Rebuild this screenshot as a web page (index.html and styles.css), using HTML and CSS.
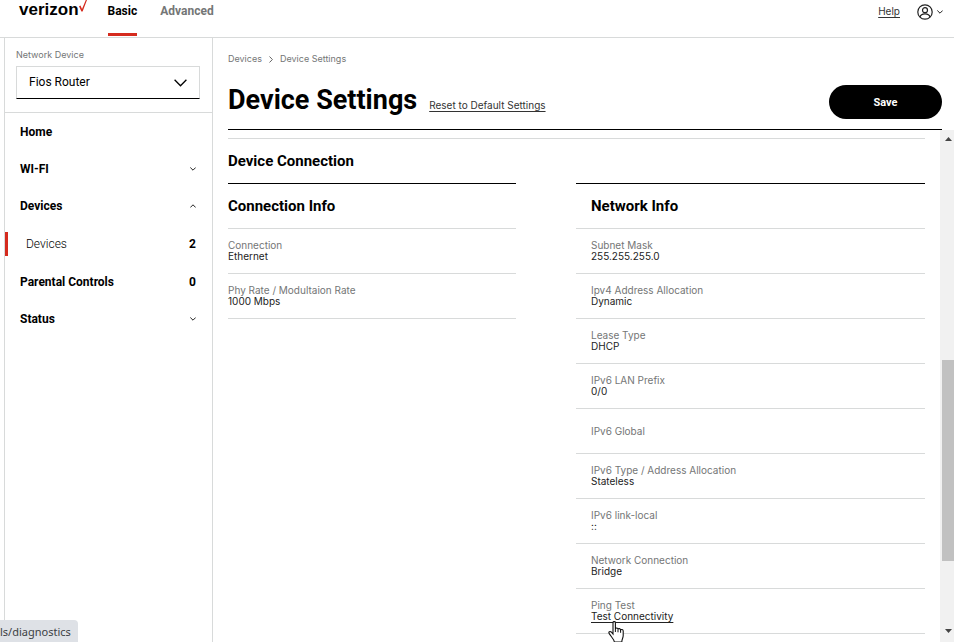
FILE: index.html
```html
<!DOCTYPE html>
<html lang="en">
<head>
  <meta charset="UTF-8">
  <meta name="viewport" content="width=device-width, initial-scale=1.0">
  <title>Device Settings</title>
  <link rel="stylesheet" href="styles.css">
</head>
<body>
  <header class="topbar">
    <a class="logo" href="#">verizon<svg class="logo-check" width="8" height="12" viewBox="0 0 8 12"><path d="M0 6.2 L1.5 5.6 L3 9 L6.8 0 L8 0 L3.6 11.5 L2.4 11.5 Z" fill="#d52b1e"/></svg></a>
    <nav class="tabs">
      <a class="tab active" href="#">Basic</a>
      <a class="tab" href="#">Advanced</a>
    </nav>
    <a class="help" href="#">Help</a>
    <button class="account" aria-label="Account">
      <svg width="16" height="16" viewBox="0 0 16 16" fill="none" stroke="#222" stroke-width="1.2"><circle cx="8" cy="8" r="7.2"/><circle cx="8" cy="6.2" r="2.5"/><path d="M3 13 C3.6 10.6 5.6 9.9 8 9.9 S12.4 10.6 13 13"/></svg>
      <svg width="6" height="4" viewBox="0 0 6 4" fill="none" stroke="#222"><path d="M0.3 0.5 L3 3.2 L5.7 0.5"/></svg>
    </button>
  </header>

  <div class="layout">
    <aside class="sidebar">
      <div class="device-picker">
        <label for="network-device">Network Device</label>
        <div class="select-wrap">
          <select id="network-device">
            <option>Fios Router</option>
          </select>
          <svg class="select-arrow" width="13" height="8" viewBox="0 0 13 8" fill="none" stroke="#000" stroke-width="1.3"><path d="M0.6 0.8 L6.5 6.8 L12.4 0.8"/></svg>
        </div>
      </div>
      <ul class="menu">
        <li><a href="#">Home</a></li>
        <li><a href="#">WI-FI <svg width="6" height="4" viewBox="0 0 6 4" fill="none" stroke="#222"><path d="M0.3 0.5 L3 3.2 L5.7 0.5"/></svg></a></li>
        <li>
          <a href="#">Devices <svg width="6" height="4" viewBox="0 0 6 4" fill="none" stroke="#222"><path d="M0.3 3.5 L3 0.8 L5.7 3.5"/></svg></a>
          <ul class="submenu">
            <li><a href="#">Devices <b>2</b></a></li>
          </ul>
        </li>
        <li><a href="#">Parental Controls <b>0</b></a></li>
        <li><a href="#">Status <svg width="6" height="4" viewBox="0 0 6 4" fill="none" stroke="#222"><path d="M0.3 0.5 L3 3.2 L5.7 0.5"/></svg></a></li>
      </ul>
    </aside>

    <main class="main">
      <div class="page-head">
        <div class="breadcrumb">
          <a href="#">Devices</a>
          <svg width="4" height="7" viewBox="0 0 4 7" fill="none" stroke="#666"><path d="M0.5 0.5 L3.4 3.5 L0.5 6.5"/></svg>
          <span>Device Settings</span>
        </div>
        <div class="title-row">
          <h1>Device Settings</h1>
          <a class="reset" href="#">Reset to Default Settings</a>
          <button class="save">Save</button>
        </div>
      </div>

      <div class="scroll-area">
        <div class="content">
          <h2>Device Connection</h2>
          <div class="columns">
            <section class="info">
              <h3>Connection Info</h3>
              <dl>
                <div class="row"><dt>Connection</dt><dd>Ethernet</dd></div>
                <div class="row"><dt>Phy Rate / Modultaion Rate</dt><dd>1000 Mbps</dd></div>
              </dl>
            </section>
            <section class="info network">
              <h3>Network Info</h3>
              <dl>
                <div class="row"><dt>Subnet Mask</dt><dd>255.255.255.0</dd></div>
                <div class="row"><dt>Ipv4 Address Allocation</dt><dd>Dynamic</dd></div>
                <div class="row"><dt>Lease Type</dt><dd>DHCP</dd></div>
                <div class="row"><dt>IPv6 LAN Prefix</dt><dd>0/0</dd></div>
                <div class="row"><dt>IPv6 Global</dt></div>
                <div class="row"><dt>IPv6 Type / Address Allocation</dt><dd>Stateless</dd></div>
                <div class="row"><dt>IPv6 link-local</dt><dd>::</dd></div>
                <div class="row"><dt>Network Connection</dt><dd>Bridge</dd></div>
                <div class="row">
                  <dt>Ping Test</dt>
                  <dd class="ping"><a href="#">Test Connectivity</a>
                    <svg class="pointer" width="18" height="22" viewBox="0 0 18 22"><path d="M5 1.5 C5 0.3 7.4 0.3 7.4 1.5 V8 C7.6 6.6 10 6.8 10 8.3 C10.4 7.2 12.6 7.4 12.6 9 C13.2 8 15.2 8.4 15.2 10 V14.5 C15.2 17 13.8 18 13.8 21 H6.4 C6.2 18.5 3.4 16 1.2 12.6 C0.2 11 2 9.8 3.2 11 L5 13 Z" fill="#fff" stroke="#111" stroke-width="1.1"/><path d="M7.4 8 V11 M10 8.3 V11.3 M12.6 9 V11.8" stroke="#111" fill="none"/></svg>
                  </dd>
                </div>
              </dl>
            </section>
          </div>
        </div>
        <div class="scrollbar" aria-hidden="true">
          <svg width="7" height="4" viewBox="0 0 7 4"><path d="M0 4 L3.5 0 L7 4 Z" fill="#444"/></svg>
          <div class="track"><div class="thumb"></div></div>
          <svg width="7" height="4" viewBox="0 0 7 4"><path d="M0 0 L3.5 4 L7 0 Z" fill="#444"/></svg>
        </div>
      </div>
    </main>
  </div>

  <div class="status-bubble">ls/diagnostics</div>
</body>
</html>
```

FILE: styles.css
```css
* {
  box-sizing: border-box;
}

body {
  margin: 0;
  height: 100vh;
  display: flex;
  flex-direction: column;
  overflow: hidden;
  font-family: Roboto, Arial, sans-serif;
  font-size: 12px;
  color: #000;
  background: #fff;
}

a {
  color: inherit;
  text-decoration: none;
}

svg {
  flex-shrink: 0;
}

button {
  border: none;
  font-family: inherit;
  cursor: pointer;
}

ul,
dl,
dd,
h1,
h2,
h3 {
  margin: 0;
  padding: 0;
}

ul {
  list-style: none;
}

/* top bar */
.topbar {
  display: flex;
  flex-shrink: 0;
  height: 38px;
  padding: 0 11px 0 19px;
  border-bottom: 1px solid #d8dada;
}

.logo {
  display: flex;
  align-items: flex-start;
  font-family: "Liberation Sans", Arial, sans-serif;
  font-size: 17px;
  font-weight: bold;
  line-height: 19px;
}

.tabs {
  display: flex;
  gap: 23px;
  margin-left: 21px;
  flex: 1;
}

.tab {
  height: 36px;
  line-height: 22px;
  font-weight: bold;
  color: #747676;
}

.tab.active {
  color: #000;
  border-bottom: 3px solid #d52b1e;
}

.help {
  font-family: Inter, sans-serif;
  font-size: 10px;
  line-height: 22px;
  color: #333;
  text-decoration: underline;
  text-underline-offset: 2px;
}

.account {
  display: flex;
  align-items: center;
  gap: 4px;
  height: 24px;
  margin-left: 17px;
  padding: 0;
  background: none;
}

.layout {
  display: flex;
  flex: 1;
  min-height: 0;
}

/* sidebar */
.sidebar {
  width: 209px;
  flex-shrink: 0;
  margin-left: 4px;
  border-left: 1px solid #d8dada;
  border-right: 1px solid #d8dada;
}

.device-picker {
  padding: 11px 12px 13px 11px;
  border-bottom: 1px solid #d8dada;
}

.device-picker label {
  display: block;
  margin-bottom: 5px;
  font-family: Inter, sans-serif;
  font-size: 9px;
  line-height: 12px;
  color: #747676;
}

.select-wrap {
  position: relative;
}

.select-wrap select {
  display: block;
  width: 100%;
  height: 33px;
  padding: 0 12px 2px;
  appearance: none;
  border: 1px solid #d8dada;
  border-bottom-color: #000;
  border-radius: 0;
  background: #fff;
  font-family: inherit;
  font-size: 12px;
  color: #000;
}

.select-arrow {
  position: absolute;
  right: 13px;
  top: 13px;
  pointer-events: none;
}

.menu {
  font-weight: bold;
}

.menu a {
  display: flex;
  align-items: center;
  justify-content: space-between;
  height: 37px;
  padding: 0 16px 0 15px;
}

.menu b {
  font-weight: bold;
}

.submenu {
  margin: 1px 0;
}

.submenu li {
  display: flex;
  align-items: center;
}

.submenu li::before {
  content: "";
  width: 3px;
  height: 24px;
  background: #d52b1e;
}

.submenu a {
  flex: 1;
  padding-left: 18px;
  font-weight: 300;
}

/* main */
.main {
  display: flex;
  flex-direction: column;
  flex: 1;
  min-width: 0;
}

.page-head {
  margin: 0 12px 0 15px;
  padding-top: 15px;
  border-bottom: 1px solid #000;
}

.breadcrumb {
  display: flex;
  align-items: center;
  gap: 7px;
  font-family: Inter, sans-serif;
  font-size: 9px;
  line-height: 12px;
  color: #747676;
}

.title-row {
  display: flex;
  align-items: baseline;
  gap: 12px;
  padding: 20px 0 10px;
}

h1 {
  font-size: 27px;
  line-height: 30px;
}

.reset {
  font-family: Inter, sans-serif;
  font-size: 10px;
  color: #333;
  text-decoration: underline;
  text-underline-offset: 2px;
}

.save {
  align-self: center;
  width: 113px;
  height: 34px;
  margin-left: auto;
  border-radius: 17px;
  background: #000;
  color: #fff;
  font-size: 11px;
  font-weight: bold;
}

.scroll-area {
  display: flex;
  flex: 1;
  min-height: 0;
  gap: 15px;
  overflow: hidden;
}

.content {
  flex: 1;
  margin: 8px 0 0 15px;
  border-top: 1px solid #d8dada;
}

h2 {
  font-size: 15px;
  line-height: 44px;
}

.columns {
  display: grid;
  grid-template-columns: 288fr 349fr;
  gap: 60px;
}

.info h3 {
  border-top: 1px solid #000;
  border-bottom: 1px solid #d8dada;
  font-size: 15px;
  line-height: 44px;
}

.network h3,
.network .row {
  padding-left: 15px;
}

.row {
  display: flex;
  flex-direction: column;
  justify-content: center;
  height: 45px;
  border-bottom: 1px solid #d8dada;
  font-family: Inter, sans-serif;
  font-size: 10px;
  line-height: 11px;
}

.row dt {
  color: #747676;
}

.row dd {
  color: #222;
}

.ping {
  position: relative;
}

.ping a {
  text-decoration: underline;
  text-underline-offset: 2px;
}

.pointer {
  position: absolute;
  left: 17px;
  top: 10px;
}

/* scrollbar */
.scrollbar {
  display: flex;
  flex-direction: column;
  align-items: center;
  justify-content: space-between;
  width: 14px;
  padding: 7px 0 9px 2px;
  background: #f1f1f1;
}

.track {
  align-self: stretch;
  flex: 1;
  display: flex;
  flex-direction: column;
  margin: 7px 0;
}

.track::before {
  content: "";
  flex: 212;
}

.track::after {
  content: "";
  flex: 61;
}

.thumb {
  flex: 201;
  background: #c1c1c1;
}

.status-bubble {
  position: fixed;
  left: 0;
  bottom: 0;
  height: 22px;
  padding-right: 7px;
  border-top-right-radius: 4px;
  background: #dee1e6;
  color: #3c4043;
  font-family: "Noto Sans", sans-serif;
  font-size: 11px;
  line-height: 23px;
}
```
